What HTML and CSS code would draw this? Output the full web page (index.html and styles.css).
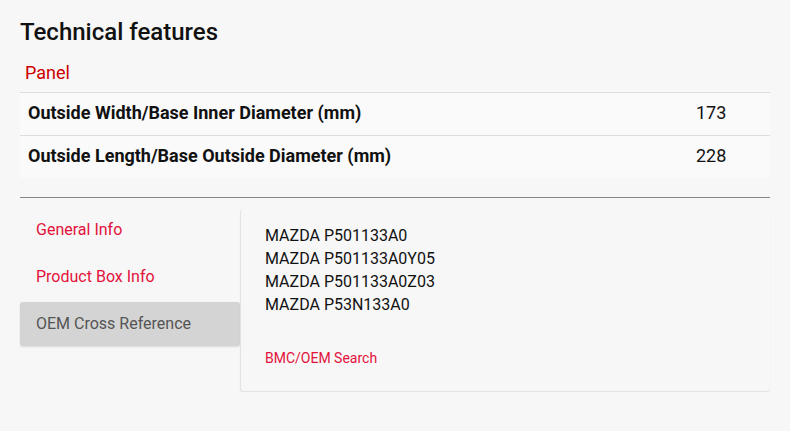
FILE: index.html
```html
<!DOCTYPE html>
<html>
<head>
<meta charset="utf-8">
<link rel="stylesheet" href="styles.css">
</head>
<body>
<div class="page">
  <h2 class="title">Technical features</h2>
  <div class="group">Panel</div>
  <div class="table">
    <div class="row">
      <div class="label">Outside Width/Base Inner Diameter (mm)</div>
      <div class="value">173</div>
    </div>
    <div class="row">
      <div class="label">Outside Length/Base Outside Diameter (mm)</div>
      <div class="value">228</div>
    </div>
  </div>
  <hr class="divider">
  <div class="tabs">
    <div class="tablist">
      <div class="tab">General Info</div>
      <div class="tab">Product Box Info</div>
      <div class="tab active">OEM Cross Reference</div>
    </div>
    <div class="panel">
      <div class="refs">
        <div>MAZDA P501133A0</div>
        <div>MAZDA P501133A0Y05</div>
        <div>MAZDA P501133A0Z03</div>
        <div>MAZDA P53N133A0</div>
      </div>
      <div class="search">BMC/OEM Search</div>
    </div>
  </div>
</div>
</body>
</html>
```
FILE: styles.css
```css
html, body {
  margin: 0;
  padding: 0;
  background: #f7f7f7;
  font-family: Roboto, "Liberation Sans", Arial, sans-serif;
  color: #111;
}
.page {
  padding: 16px 20px 0 20px;
}
.title {
  margin: 0;
  font-size: 24px;
  font-weight: 500;
  line-height: 32px;
  color: #111;
}
.group {
  margin-top: 8px;
  padding: 0 5px;
  height: 36px;
  line-height: 34px;
  font-size: 18px;
  color: #cc0000;
}
.table {
  background: #fafafa;
}
.row {
  display: grid;
  grid-template-columns: 1fr 82px;
  border-top: 1px solid #dddddd;
  height: 42px;
  box-sizing: content-box;
  padding-bottom: 0;
  align-items: start;
}
.label {
  padding-left: 8px;
  padding-top: 8px;
  line-height: 24px;
  font-weight: 700;
  font-size: 18px;
  color: #111;
}
.value {
  padding-left: 8px;
  padding-top: 8px;
  line-height: 24px;
  font-size: 18px;
  color: #111;
}
.divider {
  margin: 19px 0 0 0;
  border: 0;
  border-top: 1px solid #868686;
  height: 0;
}
.tabs {
  display: flex;
  margin-top: 10px;
}
.tablist {
  width: 220px;
  flex: none;
}
.tab {
  height: 44px;
  line-height: 44px;
  margin-bottom: 3px;
  padding-left: 16px;
  font-size: 16px;
  color: #e2123b;
  border-radius: 3px;
}
.tab.active {
  background: #d4d4d4;
  color: #555555;
  box-shadow: 0 1px 2px rgba(0,0,0,0.12);
}
.panel {
  flex: 1;
  margin-top: 1px;
  height: 183px;
  box-sizing: border-box;
  padding: 15px 24px 0 24px;
  border-left: 1px solid #e3e3e3;
  border-bottom: 1px solid #e3e3e3;
  border-radius: 4px;
  box-shadow: 0 1px 2px rgba(0,0,0,0.05);
}
.refs {
  font-size: 16px;
  line-height: 23px;
  color: #111;
}
.search {
  margin-top: 33px;
  font-size: 14px;
  line-height: 18px;
  color: #e2123b;
}
```
